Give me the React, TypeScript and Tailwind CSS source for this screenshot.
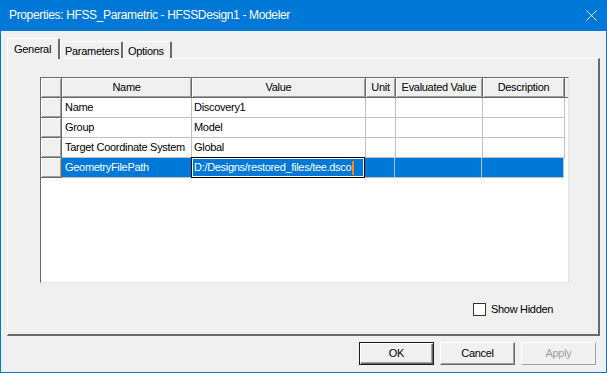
import React from "react";

const cols = [
  { label: "", w: "w-[21px]" },
  { label: "Name", w: "w-[130px]" },
  { label: "Value", w: "w-[174px]" },
  { label: "Unit", w: "w-[30px]" },
  { label: "Evaluated Value", w: "w-[87px]" },
  { label: "Description", w: "w-[82px]" },
];

const rows = [
  ["Name", "Discovery1"],
  ["Group", "Model"],
  ["Target Coordinate System", "Global"],
  ["GeometryFilePath", "D:/Designs/restored_files/tee.dsco"],
];

const raised =
  "bg-[#f0f0f0] border-r border-b border-[#696969] shadow-[inset_1px_1px_0_#ffffff,inset_-1px_-1px_0_#a0a0a0]";

const Tab = ({ label, active, w }: { label: string; active?: boolean; w: string }) => (
  <div
    className={
      active
        ? `${w} h-[21px] -mb-px z-10 relative bg-[#f0f0f0] border-l border-t border-white border-r-2 border-r-[#696969] rounded-t-[2px] pl-[6px] pt-[2px]`
        : `${w} h-[17px] bg-[#f0f0f0] border-l border-t border-white border-r-2 border-r-[#696969] rounded-t-[2px] pl-[4px] pt-[1px]`
    }
  >
    {label}
  </div>
);

const Button = ({ label, def, disabled }: { label: string; def?: boolean; disabled?: boolean }) => (
  <div
    className={
      def
        ? "w-[75px] h-[23px] flex items-center justify-center border border-[#1a1a1a] bg-[#f0f0f0] shadow-[inset_1px_1px_0_#ffffff,inset_-1px_-1px_0_#696969,inset_-2px_-2px_0_#a0a0a0]"
        : disabled
        ? "w-[75px] h-[23px] flex items-center justify-center border-l border-t border-white border-r border-b border-r-[#a0a0a0] border-b-[#a0a0a0] bg-[#f0f0f0] text-[#a0a0a0]"
        : "w-[75px] h-[23px] flex items-center justify-center border-l border-t border-white border-r border-b border-r-[#696969] border-b-[#696969] bg-[#f0f0f0] shadow-[inset_-1px_-1px_0_#a0a0a0]"
    }
  >
    {label}
  </div>
);

export default function App() {
  return (
    <div className="w-[607px] h-[373px] flex flex-col bg-[#0078d7] font-['Liberation_Sans',Arial,sans-serif] text-[11px] tracking-[-0.3px] text-black select-none">
      <div className="h-[31px] flex items-center justify-between pl-[9px] pr-[10px] pb-[1px] text-white text-[12px] tracking-[-0.35px]">
        <span>Properties: HFSS_Parametric - HFSSDesign1 - Modeler</span>
        <svg width="11" height="11" viewBox="0 0 11 11">
          <path d="M0.5 0.5 L10.5 10.5 M10.5 0.5 L0.5 10.5" stroke="#ffffff" strokeWidth="1" />
        </svg>
      </div>
      <div className="flex-1 mx-px mb-px bg-[#f0f0f0] pl-[6px] pr-[6px] pt-[7px] flex flex-col">
        <div className="flex items-end h-[20px]">
          <Tab label="General" active w="w-[53px]" />
          <Tab label="Parameters" w="w-[63px]" />
          <Tab label="Options" w="w-[49px]" />
        </div>
        <div className="h-[278px] border-l border-t border-white border-r-2 border-b-2 border-r-[#696969] border-b-[#696969] pl-[32px] pt-[18px] flex flex-col">
          <div className="w-[529px] h-[206px] bg-white border-l border-t border-[#696969] border-r border-b border-r-[#e3e3e3] border-b-[#e3e3e3] flex flex-col">
            <div className="flex h-[20px]">
              {cols.map((c, i) => (
                <div key={i} className={`${c.w} ${raised} flex items-center justify-center`}>
                  {c.label}
                </div>
              ))}
              <div className="w-[3px] bg-[#f0f0f0] border-b border-[#696969]" />
            </div>
            {rows.map(([name, value], r) => {
              const sel = r === 3;
              return (
                <div key={r} className="flex h-[20px]">
                  <div className={`w-[21px] ${raised}`} />
                  <div
                    className={`w-[130px] border-r border-b border-[#c0c0c0] pl-[3px] flex items-center ${
                      sel ? "bg-[#0078d7] text-white" : "bg-white"
                    }`}
                  >
                    {name}
                  </div>
                  {sel ? (
                    <div className="w-[174px] -ml-px -mt-px h-[21px] border border-black bg-white p-px flex">
                      <div className="flex-1 bg-[#0078d7] text-white flex items-center pl-[1px]">
                        <span>{value}</span>
                        <span className="w-[2px] h-[14px] bg-[#ff8c00] ml-[1px]" />
                      </div>
                    </div>
                  ) : (
                    <div className="w-[174px] border-r border-b border-[#c0c0c0] pl-[2px] flex items-center bg-white">
                      {value}
                    </div>
                  )}
                  <div className={`w-[30px] border-r border-b border-[#c0c0c0] ${sel ? "bg-[#0078d7]" : "bg-white"}`} />
                  <div className={`w-[87px] border-r border-b border-[#c0c0c0] ${sel ? "bg-[#0078d7]" : "bg-white"}`} />
                  <div className={`w-[82px] border-r border-b border-[#c0c0c0] ${sel ? "bg-[#0078d7]" : "bg-white"}`} />
                </div>
              );
            })}
          </div>
          <div className="flex items-center mt-[18px] pl-[433px] gap-[5px]">
            <div className="w-[13px] h-[13px] bg-white border border-[#333333]" />
            <span>Show Hidden</span>
          </div>
        </div>
        <div className="flex justify-end gap-[6px] mt-[6px] pr-[4px]">
          <Button label="OK" def />
          <Button label="Cancel" />
          <Button label="Apply" disabled />
        </div>
      </div>
    </div>
  );
}
